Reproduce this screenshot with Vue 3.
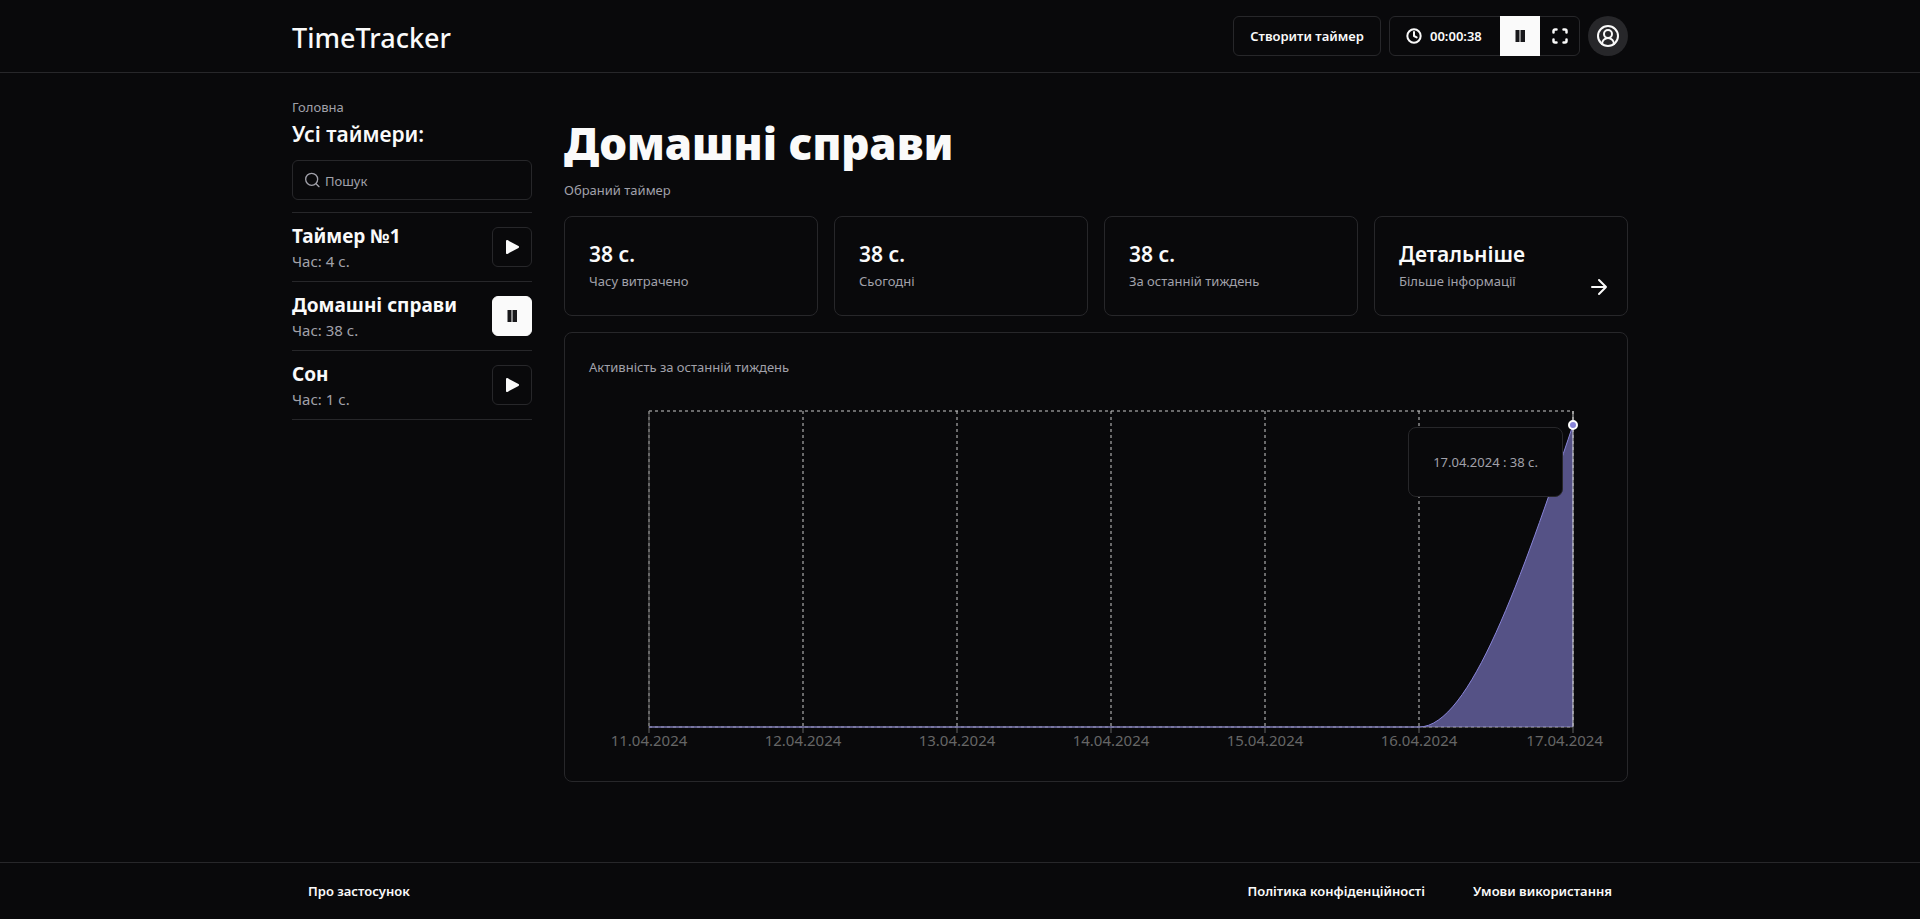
<script setup>
import { ref } from 'vue'

const search = ref('')
const timers = [
  { id: 1, name: 'Таймер №1', time: '4 с.', running: false },
  { id: 2, name: 'Домашні справи', time: '38 с.', running: true },
  { id: 3, name: 'Сон', time: '1 с.', running: false },
]
const stats = [
  { value: '38 с.', label: 'Часу витрачено' },
  { value: '38 с.', label: 'Сьогодні' },
  { value: '38 с.', label: 'За останній тиждень' },
]
const days = ['11', '12', '13', '14', '15', '16', '17'].map((d, i, all) => {
  const last = i === all.length - 1
  return {
    label: `${d}.04.2024`,
    x: 60 + i * 154,
    textX: last ? 1014 : 60 + i * 154,
    anchor: last ? 'end' : 'middle',
  }
})
const curve = 'M60 326H830C881 326 933 175 984 24'
</script>

<template>
  <div class="page">
    <header class="header">
      <div class="container header-row">
        <a href="#" class="brand">TimeTracker</a>
        <div class="actions">
          <button type="button" class="btn outline create">Створити таймер</button>
          <div class="timer-group">
            <button type="button" class="btn clock">
              <svg width="16" height="16" viewBox="0 0 24 24" class="line-icon">
                <circle cx="12" cy="12" r="10" />
                <path d="M12 6v6l4 2" />
              </svg>
              <span>00:00:38</span>
            </button>
            <button type="button" class="icon-btn solid" aria-label="Пауза">
              <svg width="24" height="24" viewBox="0 0 24 24" fill="currentColor">
                <path d="M7.500 6h4v12h-4zM12.500 6H17v12h-4.500z" />
              </svg>
            </button>
            <button type="button" class="icon-btn" aria-label="На весь екран">
              <svg width="16" height="16" viewBox="0 0 16 16" class="frame-icon">
                <path d="M1.500 4.500V3A1.500 1.500 0 0 1 3 1.500h1.500M11.500 1.500H13A1.500 1.500 0 0 1 14.500 3v1.500M14.500 11.500V13a1.500 1.500 0 0 1-1.500 1.500h-1.500M4.500 14.500H3A1.500 1.500 0 0 1 1.500 13v-1.500" />
              </svg>
            </button>
          </div>
          <button type="button" class="avatar" aria-label="Профіль">
            <svg width="24" height="24" viewBox="0 0 24 24" class="line-icon">
              <circle cx="12" cy="12" r="10" />
              <circle cx="12" cy="10" r="4" />
              <path d="M6 20c0-3 2.500-6 6-6s6 3 6 6" />
            </svg>
          </button>
        </div>
      </div>
    </header>

    <div class="container body">
      <aside class="sidebar">
        <p class="muted">Головна</p>
        <h2 class="side-title">Усі таймери:</h2>
        <label class="search">
          <svg width="16" height="16" viewBox="0 0 24 24" class="line-icon">
            <circle cx="10" cy="11" r="9" />
            <path d="m17 18 4 4" />
          </svg>
          <input v-model="search" type="text" placeholder="Пошук" aria-label="Пошук" />
        </label>
        <ul class="timers">
          <li v-for="t in timers" :key="t.id" class="timer">
            <div>
              <h3 class="timer-name">{{ t.name }}</h3>
              <p class="timer-time">Час: {{ t.time }}</p>
            </div>
            <button
              type="button"
              class="icon-btn boxed"
              :class="{ solid: t.running }"
              :aria-label="t.running ? 'Пауза' : 'Старт'"
            >
              <svg width="24" height="24" viewBox="0 0 24 24" fill="currentColor">
                <path v-if="t.running" d="M7.500 6h4v12h-4zM12.500 6H17v12h-4.500z" />
                <path v-else class="play" d="M7 6l11 6-11 6z" />
              </svg>
            </button>
          </li>
        </ul>
      </aside>

      <main class="main">
        <h1 class="title">Домашні справи</h1>
        <p class="muted subtitle">Обраний таймер</p>
        <div class="stats">
          <section v-for="s in stats" :key="s.label" class="card stat">
            <h3 class="stat-value">{{ s.value }}</h3>
            <p class="muted">{{ s.label }}</p>
          </section>
          <a href="#" class="card stat">
            <h3 class="stat-value">Детальніше</h3>
            <p class="muted">Більше інформації</p>
            <svg width="24" height="24" viewBox="0 0 24 24" class="line-icon arrow">
              <path d="M5 12h14M12 5l7 7-7 7" />
            </svg>
          </a>
        </div>
        <section class="card chart-card">
          <p class="muted">Активність за останній тиждень</p>
          <div class="chart">
            <svg viewBox="0 0 1014 356" class="plot">
              <g class="grid">
                <path d="M60 326H984M60 10H984" />
                <path v-for="d in days" :key="d.label" :d="`M${d.x} 10V326`" />
              </g>
              <path class="axis" d="M60 10V326H984" />
              <g v-for="d in days" :key="d.label">
                <path class="axis" :d="`M${d.x} 326v6`" />
                <text :x="d.textX" y="345" :text-anchor="d.anchor" class="tick">{{ d.label }}</text>
              </g>
              <path class="area" :d="curve + 'V326H60Z'" />
              <path class="curve" :d="curve" />
              <path class="cursor" d="M984 10V326" />
              <circle class="dot" cx="984" cy="24" r="4" />
            </svg>
            <div class="card tooltip muted">17.04.2024 : 38 с.</div>
          </div>
        </section>
      </main>
    </div>

    <footer class="footer">
      <nav class="container footer-row">
        <a href="#">Про застосунок</a>
        <a href="#" class="push">Політика конфіденційності</a>
        <a href="#">Умови використання</a>
      </nav>
    </footer>
  </div>
</template>

<style>
body {
  background: #09090b;
}
</style>

<style scoped>
* {
  box-sizing: border-box;
  margin: 0;
  padding: 0;
}
.page {
  min-height: 100vh;
  display: flex;
  flex-direction: column;
  background: #09090b;
  color: #fafafa;
  font-family: "Noto Sans", "Open Sans", sans-serif;
  font-size: 13px;
  line-height: 20px;
}
a {
  color: inherit;
  text-decoration: none;
}
button,
input {
  font: inherit;
  color: inherit;
  background: none;
  border: 0;
}
svg {
  display: block;
  flex: none;
}
.line-icon,
.frame-icon {
  fill: none;
  stroke: currentColor;
  stroke-width: 2;
  stroke-linecap: round;
  stroke-linejoin: round;
}
.frame-icon {
  stroke-width: 2.5;
}
.container {
  width: 100%;
  max-width: 1400px;
  margin: 0 auto;
  padding: 0 32px;
}
.header {
  border-bottom: 1px solid #27272a;
}
.header-row {
  display: flex;
  align-items: center;
  justify-content: space-between;
  padding-top: 16px;
  padding-bottom: 16px;
}
.brand {
  padding-top: 4px;
  font-size: 27px;
  line-height: 36px;
  font-weight: 500;
}
.actions {
  display: flex;
  gap: 8px;
}
.btn {
  height: 40px;
  padding: 0 16px;
  font-weight: 600;
}
.create {
  min-width: 148px;
}
.outline,
.timer-group,
.boxed {
  border: 1px solid #27272a;
  border-radius: 6px;
}
.timer-group {
  display: flex;
  height: 40px;
}
.clock {
  display: flex;
  align-items: center;
  gap: 8px;
  min-width: 110px;
  height: 38px;
}
.clock .line-icon {
  stroke-width: 3;
  overflow: visible;
}
.icon-btn {
  display: flex;
  align-items: center;
  justify-content: center;
  width: 40px;
  height: 40px;
}
.timer-group .icon-btn {
  margin: -1px 0;
}
.timer-group .icon-btn:last-child {
  margin-right: -1px;
}
.solid {
  background: #fafafa;
  border-color: #fafafa;
  color: #18181b;
}
.avatar {
  display: flex;
  align-items: center;
  justify-content: center;
  width: 40px;
  height: 40px;
  border-radius: 50%;
  background: #27272a;
}
.body {
  flex: 1;
  display: flex;
  gap: 32px;
  padding-top: 24px;
  padding-bottom: 24px;
}
.muted {
  color: #a1a1aa;
}
.sidebar {
  width: 240px;
  flex: none;
}
.side-title {
  font-size: 21px;
  line-height: 34px;
  font-weight: 600;
}
.search {
  display: flex;
  align-items: center;
  gap: 4px;
  height: 40px;
  margin-top: 9px;
  padding: 0 12px;
  border: 1px solid #27272a;
  border-radius: 6px;
  color: #a1a1aa;
}
.search input {
  flex: 1;
  min-width: 0;
  padding-top: 2px;
  outline: none;
}
.search input::placeholder {
  color: #a1a1aa;
  opacity: 1;
}
.timers {
  list-style: none;
  margin-top: 12px;
  border-top: 1px solid #27272a;
}
.timer {
  display: flex;
  align-items: center;
  justify-content: space-between;
  padding: 8px 0;
  border-bottom: 1px solid #27272a;
}
.timer-name {
  font-size: 19px;
  line-height: 30px;
  font-weight: 700;
}
.timer-time {
  font-size: 15px;
  line-height: 20px;
  padding-bottom: 2px;
  color: #a1a1aa;
}
.play {
  stroke: currentColor;
  stroke-width: 2;
  stroke-linejoin: round;
}
.main {
  flex: 1;
  min-width: 0;
  padding-top: 22px;
}
.title {
  font-size: 44px;
  line-height: 48px;
  font-weight: 900;
}
.subtitle {
  margin: 13px 0 16px;
}
.stats {
  display: grid;
  grid-template-columns: repeat(4, 1fr);
  gap: 16px;
}
.card {
  padding: 24px;
  border: 1px solid #27272a;
  border-radius: 8px;
  background: #09090b;
}
.stat {
  position: relative;
}
.stat-value {
  margin-bottom: 4px;
  font-size: 21px;
  line-height: 26px;
  font-weight: 600;
}
.arrow {
  position: absolute;
  right: 16px;
  bottom: 16px;
}
.chart-card {
  margin-top: 16px;
}
.chart {
  position: relative;
  margin-top: 24px;
}
.plot {
  width: 100%;
  overflow: visible;
}
.grid {
  fill: none;
  stroke: #ccc;
  stroke-dasharray: 3 3;
}
.axis {
  fill: none;
  stroke: #666;
}
.tick {
  font-size: 15px;
  fill: #666;
}
.area {
  fill: #8884d8;
  fill-opacity: 0.6;
}
.curve {
  fill: none;
  stroke: #8884d8;
}
.cursor {
  stroke: #ccc;
}
.dot {
  fill: #8884d8;
  stroke: #fff;
  stroke-width: 2;
}
.tooltip {
  position: absolute;
  top: 26px;
  right: 40px;
  white-space: nowrap;
}
.footer {
  border-top: 1px solid #27272a;
}
.footer-row {
  display: flex;
  gap: 16px;
}
.footer-row a {
  padding: 18px 16px;
  font-weight: 600;
}
.push {
  margin-left: auto;
}
</style>
